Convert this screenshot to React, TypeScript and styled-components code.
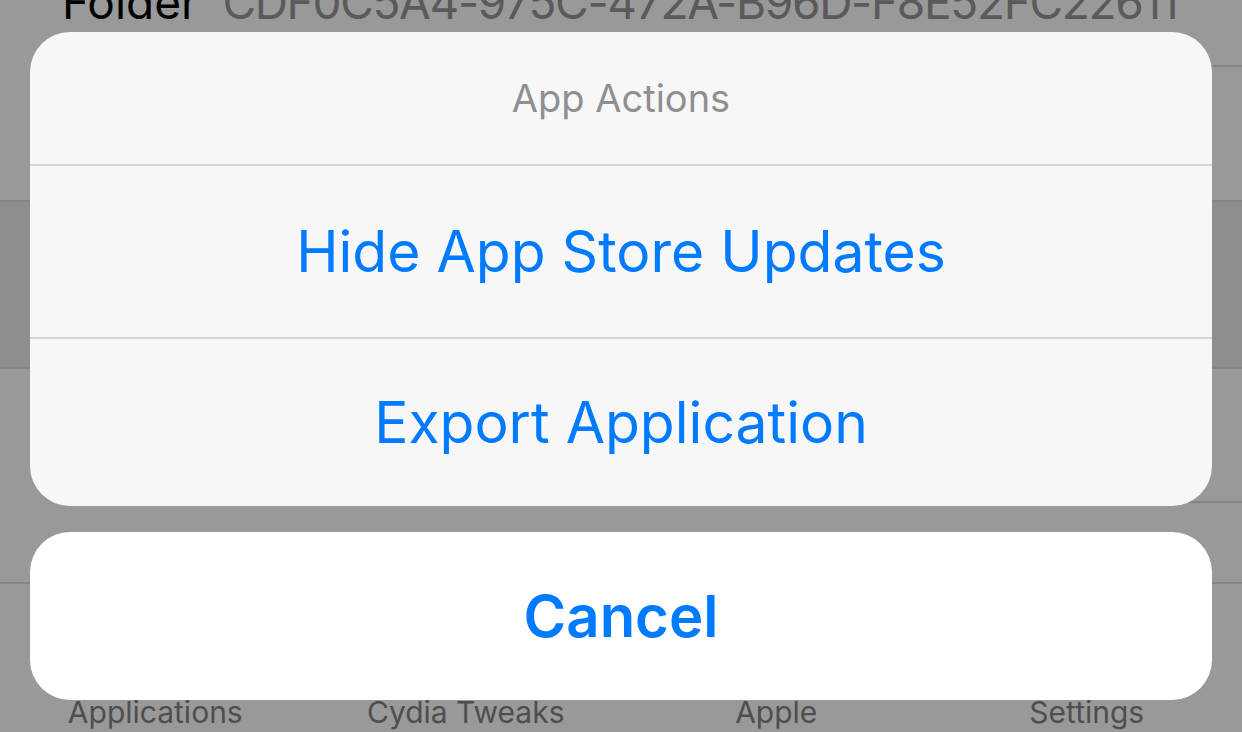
import React from "react";
import styled, { createGlobalStyle } from "styled-components";

const Global = createGlobalStyle`
  *, *::before, *::after { box-sizing: border-box; }
  html, body { margin: 0; padding: 0; }
  body { width: 1242px; height: 732px; overflow: hidden; font-family: Inter, "Noto Sans", sans-serif; }
`;

const Screen = styled.div`
  position: relative;
  width: 1242px;
  height: 732px;
  overflow: hidden;
  background: #999999;
`;

const List = styled.div`
  display: flex;
  flex-direction: column;
  margin-top: -68px;
`;

const Row = styled.div<{ $h: number; $selected?: boolean; $inset?: boolean }>`
  height: ${(p) => p.$h}px;
  flex-shrink: 0;
  background: ${(p) => (p.$selected ? "#8e8e92" : "transparent")};
  display: flex;
  align-items: flex-end;
  padding: 0 0 0 62px;
  position: relative;
  white-space: nowrap;
  border-bottom: ${(p) => (p.$inset ? "none" : "2px solid #858585")};
  &::after {
    content: "";
    display: ${(p) => (p.$inset ? "block" : "none")};
    position: absolute;
    left: 62px;
    right: 0;
    bottom: 0;
    height: 2px;
    background: #858585;
  }
`;

const FolderLabel = styled.span`
  font-size: 46px;
  color: #000;
  line-height: 1;
  margin-bottom: 42px;
  margin-right: 24px;
`;

const FolderValue = styled.span`
  font-size: 46px;
  letter-spacing: -1.3px;
  color: #5a5a5c;
  line-height: 1;
  margin-bottom: 42px;
`;

const TabBar = styled.div`
  height: 148px;
  display: grid;
  grid-template-columns: repeat(4, 1fr);
  align-items: end;
  padding-bottom: 2px;
`;

const TabLabel = styled.div`
  font-size: 30px;
  color: #4e4e50;
  text-align: center;
  line-height: 36px;
`;

const Overlay = styled.div`
  position: absolute;
  left: 30px;
  top: 32px;
  width: 1182px;
  display: flex;
  flex-direction: column;
  gap: 26px;
`;

const Group = styled.div<{ $bg: string }>`
  background: ${(p) => p.$bg};
  border-radius: 40px;
  overflow: hidden;
  display: flex;
  flex-direction: column;
`;

const Title = styled.div`
  height: 134px;
  display: flex;
  align-items: center;
  justify-content: center;
  font-size: 38px;
  color: #8f8f8f;
  border-bottom: 2px solid #d4d4d8;
`;

const Action = styled.div<{ $h: number; $bold?: boolean; $last?: boolean }>`
  height: ${(p) => p.$h}px;
  display: flex;
  align-items: center;
  justify-content: center;
  font-size: ${(p) => (p.$bold ? 58 : 57)}px;
  font-weight: ${(p) => (p.$bold ? 600 : 400)};
  color: #007aff;
  border-bottom: ${(p) => (p.$last ? "none" : "2px solid #d4d4d8")};
`;

export default function App() {
  return (
    <>
      <Global />
      <Screen>
        <List>
          <Row $h={135} $inset>
            <FolderLabel>Folder</FolderLabel>
            <FolderValue>CDF0C5A4-975C-472A-B96D-F8E52FC22611</FolderValue>
          </Row>
          <Row $h={135} />
          <Row $h={167} $selected />
          <Row $h={134} $inset />
          <Row $h={81} />
        </List>
        <TabBar>
          <TabLabel>Applications</TabLabel>
          <TabLabel>Cydia Tweaks</TabLabel>
          <TabLabel>Apple</TabLabel>
          <TabLabel>Settings</TabLabel>
        </TabBar>
        <Overlay>
          <Group $bg="#f7f7f8">
            <Title>App Actions</Title>
            <Action $h={173}>Hide App Store Updates</Action>
            <Action $h={167} $last>Export Application</Action>
          </Group>
          <Group $bg="#ffffff">
            <Action $h={168} $bold $last>Cancel</Action>
          </Group>
        </Overlay>
      </Screen>
    </>
  );
}
